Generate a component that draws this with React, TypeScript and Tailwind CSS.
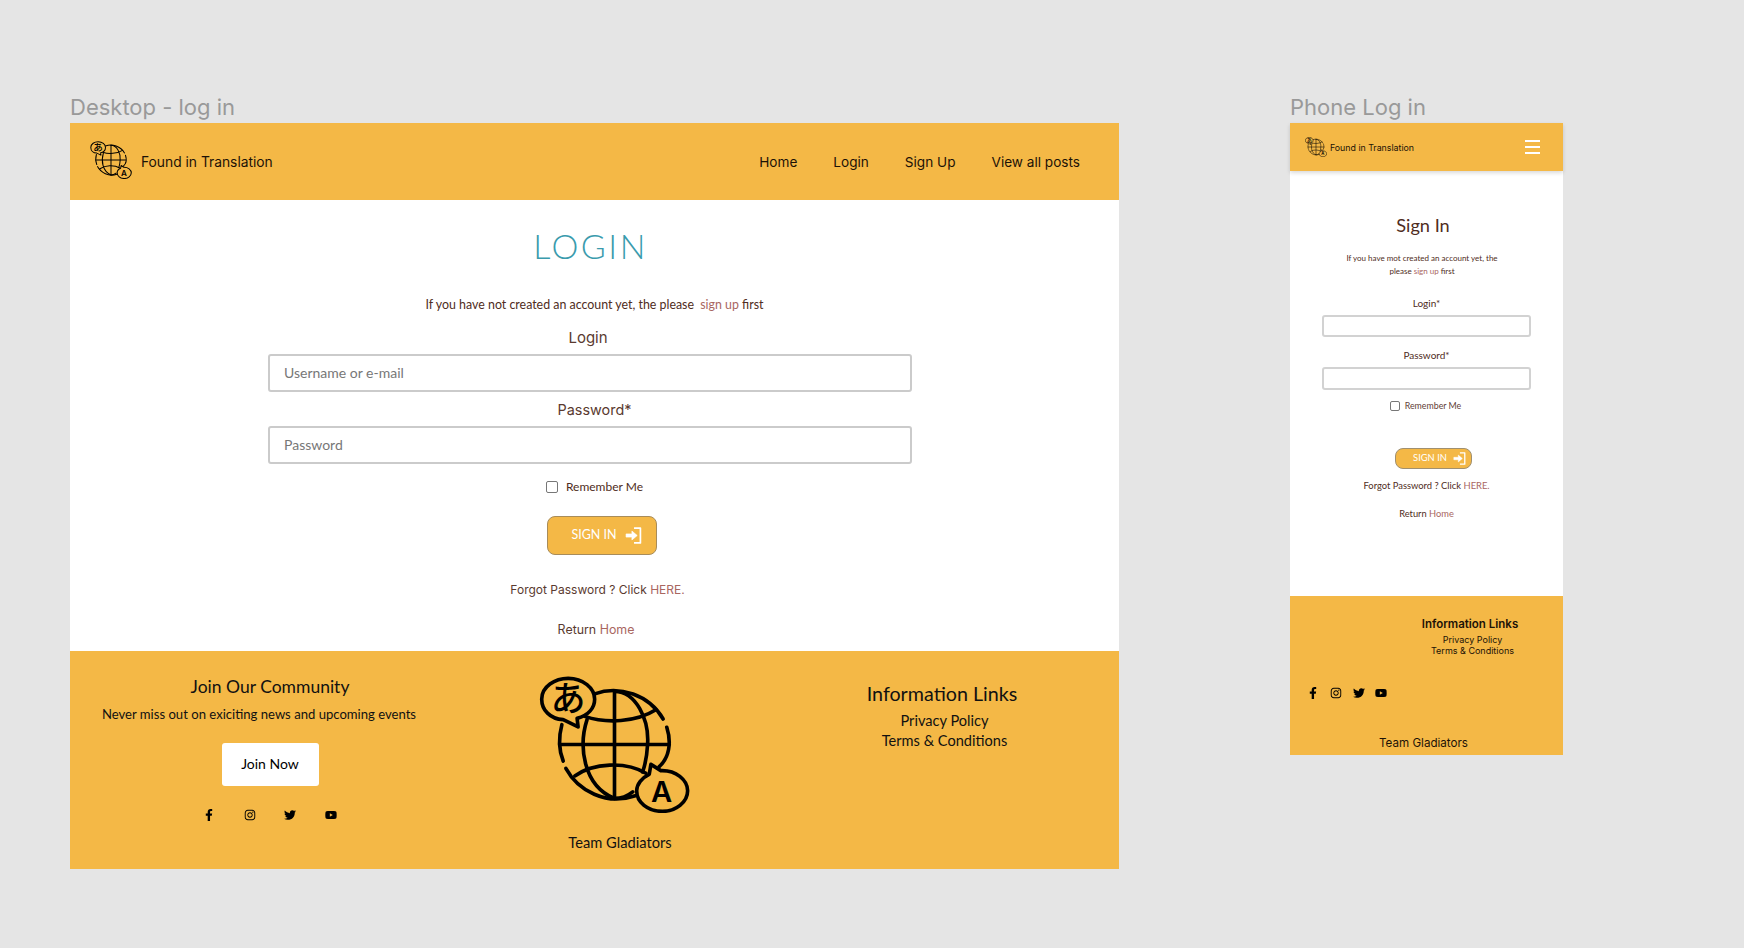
import { FaFacebookF, FaInstagram, FaTwitter, FaYoutube } from "react-icons/fa";

function Globe({ className }: { className: string }) {
  return (
    <svg viewBox="117 78 456 414" className={className} fill="none" stroke="#000" strokeWidth="11" strokeLinecap="round" strokeLinejoin="round">
      <path d="M285 132 C360 105 450 135 492 208" />
      <path d="M503 233 C518 280 510 325 480 352" />
      <path d="M186 225 C176 262 176 300 190 335" />
      <path d="M198 357 C235 425 320 470 408 440" />
      <path d="M262 210 C236 290 250 410 345 448 C365 448 385 440 400 428" />
      <path d="M345 125 C410 125 450 210 445 285 C443 320 438 345 430 368" />
      <path d="M345 125 V448" />
      <path d="M180 285 H510" />
      <path d="M255 200 C320 222 410 218 470 180" />
      <path d="M225 380 C280 340 380 335 440 372" />
      <path d="M235 232 L190 210 C150 208 125 180 125 148 C125 110 165 85 205 85 C250 85 285 115 285 148 C285 175 265 198 232 206 Z" />
      <path d="M455 345 L485 364 C530 362 566 392 566 425 C566 460 530 487 490 487 C445 487 412 460 412 425 C412 405 428 385 450 375 Z" />
      <text x="205" y="185" fontSize="105" fill="#000" stroke="none" textAnchor="middle" fontFamily="'Noto Sans CJK JP', sans-serif" fontWeight="500">あ</text>
      <text x="487" y="458" fontSize="88" fill="#000" stroke="none" textAnchor="middle" fontFamily="Inter, sans-serif" fontWeight="600">A</text>
    </svg>
  );
}

function SignInIcon({ className }: { className: string }) {
  return (
    <svg viewBox="0 0 16 16" className={className} fill="none" stroke="#fff">
      <path d="M8.5 1H14.5V15H8.5" strokeWidth="1.6" strokeLinejoin="round" />
      <path d="M1 6.5H6.5V3.8L11.5 8L6.5 12.2V9.5H1Z" fill="#fff" strokeWidth="0.6" strokeLinejoin="round" />
    </svg>
  );
}

function Socials({ cell, size }: { cell: string; size: string }) {
  const icons = [FaFacebookF, FaInstagram, FaTwitter, FaYoutube];
  return (
    <>
      {icons.map((Icon, i) => (
        <div key={i} className={`flex justify-center ${cell}`}>
          <Icon className={`${size} text-black`} />
        </div>
      ))}
    </>
  );
}

export default function App() {
  return (
    <div className="flex h-[948px] w-[1744px] items-start overflow-hidden bg-[#e5e5e5] pl-[70px] pt-[91px] font-['Lato',sans-serif] text-[#4f2c22]">
      <section className="w-[1049px] shrink-0">
        <h2 className="font-['Inter',sans-serif] text-[22px] leading-[32px] text-[#999999]">Desktop - log in</h2>
        <div className="h-[746px] bg-white">
          <header className="flex h-[77px] items-center bg-[#f4b846] pl-[20px] pr-[39px] font-['Inter',sans-serif] text-[13.8px] text-[#1c1207]">
            <Globe className="mt-[-4px] h-[38px] w-[42px]" />
            <span className="ml-[9px] mt-[1px]">Found in Translation</span>
            <nav className="ml-auto mt-[1px] flex gap-[36px] text-[13.6px]">
              <span>Home</span>
              <span>Login</span>
              <span>Sign Up</span>
              <span>View all posts</span>
            </nav>
          </header>
          <main className="flex h-[451px] flex-col items-center pt-[26px]">
            <h1 className="mr-[8px] text-[34px] font-light leading-[40px] tracking-[2.5px] text-[#3a9bad]">LOGIN</h1>
            <p className="mt-[29px] text-[12.4px] leading-[20px]">
              If you have not created an account yet, the please <span className="ml-[3px] text-[#a9665f]">sign up</span> first
            </p>
            <label className="mr-[13px] mt-[11px] font-['Inter',sans-serif] text-[15px] leading-[24px] text-[#5a3a30]">Login</label>
            <input placeholder="Username or e-mail" className="mr-[9px] mt-[4px] h-[38px] w-[644px] rounded-[3px] border-2 border-[#cbcbcb] px-[14px] pb-[1px] text-[14px] outline-none placeholder:text-[#777777]" />
            <label className="mt-[6px] font-['Inter',sans-serif] text-[14.4px] leading-[24px] text-[#5a3a30]">Password*</label>
            <input placeholder="Password" className="mr-[9px] mt-[4px] h-[38px] w-[644px] rounded-[3px] border-2 border-[#cbcbcb] px-[14px] pb-[1px] text-[14px] outline-none placeholder:text-[#777777]" />
            <div className="mt-[13px] flex h-[20px] items-center gap-[8px] text-[12px]">
              <span className="h-[12px] w-[12px] rounded-[2px] border border-[#777777]" />
              <span>Remember Me</span>
            </div>
            <button className="ml-[15px] mt-[19px] flex h-[39px] w-[110px] items-center justify-center gap-[8px] rounded-[8px] border border-[#a88c5a] bg-[#f4b846] pl-[9px] text-[12.5px] text-white">
              SIGN IN
              <SignInIcon className="h-[17px] w-[17px]" />
            </button>
            <p className="ml-[6px] mt-[25px] font-['Inter',sans-serif] text-[12px] leading-[20px] text-[#5a3a30]">
              Forgot Password ? Click <span className="text-[#a9665f]">HERE.</span>
            </p>
            <p className="ml-[3px] mt-[20px] font-['Inter',sans-serif] text-[12.4px] leading-[20px] text-[#5a3a30]">
              Return <span className="text-[#a9665f]">Home</span>
            </p>
          </main>
          <footer className="flex h-[218px] bg-[#f4b846] text-[#111111]">
            <div className="flex w-[400px] flex-col items-center pt-[23px]">
              <h3 className="text-[17.5px] leading-[26px]">Join Our Community</h3>
              <p className="mr-[22px] mt-[4px] text-[13.1px] leading-[20px]">Never miss out on exiciting news and upcoming events</p>
              <button className="mt-[19px] h-[43px] w-[97px] rounded-[3px] bg-white pb-[2px] text-[14px] text-black">Join Now</button>
              <div className="mt-[23px] flex">
                <Socials cell="w-[40.5px]" size="h-[12px] w-[12px]" />
              </div>
            </div>
            <div className="flex w-[300px] flex-col items-center pt-[25px]">
              <Globe className="mr-[11px] h-[137px] w-[151px]" />
              <p className="mt-[19px] text-[14.7px] leading-[20px]">Team Gladiators</p>
            </div>
            <div className="flex w-[349px] flex-col items-center pt-[29px]">
              <h3 className="mr-[5px] text-[19.7px] leading-[28px]">Information Links</h3>
              <p className="mt-[3px] text-[14.6px] leading-[20px]">Privacy Policy</p>
              <p className="text-[14.6px] leading-[20px]">Terms &amp; Conditions</p>
            </div>
          </footer>
        </div>
      </section>

      <section className="ml-[171px] w-[273px] shrink-0">
        <h2 className="font-['Inter',sans-serif] text-[22px] leading-[32px] text-[#999999]">Phone Log in</h2>
        <div className="h-[632px] bg-white">
          <header className="relative flex h-[48px] items-center bg-[#f4b846] pl-[15px] pr-[23px] font-['Inter',sans-serif] text-[8.8px] text-[#1c1207] shadow-[0_2px_4px_rgba(0,0,0,0.15)]">
            <Globe className="h-[20px] w-[22px]" />
            <span className="ml-[3px] mt-[2px]">Found in Translation</span>
            <div className="ml-auto flex w-[15px] flex-col gap-[3.5px]">
              <span className="h-[2.5px] bg-white" />
              <span className="h-[2.5px] bg-white" />
              <span className="h-[2.5px] bg-white" />
            </div>
          </header>
          <main className="flex h-[425px] flex-col items-center pt-[40px]">
            <h1 className="mr-[7px] text-[18.2px] leading-[28px]">Sign In</h1>
            <p className="mr-[9px] mt-[13px] text-center text-[8px] leading-[13px]">
              If you have mot created an account yet, the
              <br />
              please <span className="text-[#a9665f]">sign up</span> first
            </p>
            <label className="mt-[17px] text-[10px] leading-[16px]">Login*</label>
            <input className="mt-[4px] h-[22px] w-[209px] rounded-[3px] border-2 border-[#d2d2d2] outline-none" />
            <label className="mt-[10px] text-[10px] leading-[16px]">Password*</label>
            <input className="mt-[4px] h-[23px] w-[209px] rounded-[3px] border-2 border-[#d2d2d2] outline-none" />
            <div className="mr-[2px] mt-[8px] flex h-[16px] items-center gap-[5px] text-[8.8px] text-[#5f4037]">
              <span className="h-[10px] w-[10px] rounded-[2px] border border-[#777777]" />
              <span>Remember Me</span>
            </div>
            <button className="ml-[13px] mt-[34px] flex h-[21px] w-[77px] items-center justify-center gap-[6px] rounded-[8px] border border-[#a09070] bg-[#f4b846] pl-[13px] text-[9.4px] text-white">
              SIGN IN
              <SignInIcon className="h-[13px] w-[13px]" />
            </button>
            <p className="mt-[9px] text-[9.4px] leading-[16px]">
              Forgot Password ? Click <span className="text-[#a9665f]">HERE.</span>
            </p>
            <p className="mt-[12px] text-[9.3px] leading-[16px]">
              Return <span className="text-[#a9665f]">Home</span>
            </p>
          </main>
          <footer className="h-[159px] bg-[#f4b846] pt-[20px] text-[#1c1207]">
            <div className="ml-[95px] flex w-[170px] flex-col items-center font-['Inter',sans-serif]">
              <h3 className="text-[11.5px] font-semibold leading-[16px]">Information Links</h3>
              <p className="ml-[5px] mt-[2px] text-[9px] leading-[11px]">Privacy Policy</p>
              <p className="ml-[5px] text-[9px] leading-[11px]">Terms &amp; Conditions</p>
            </div>
            <div className="ml-[12px] mt-[31px] flex">
              <Socials cell="w-[22.7px]" size="h-[12px] w-[12px]" />
            </div>
            <p className="mr-[6px] mt-[36px] text-center font-['Inter',sans-serif] text-[11.6px] leading-[16px]">Team Gladiators</p>
          </footer>
        </div>
      </section>
    </div>
  );
}
